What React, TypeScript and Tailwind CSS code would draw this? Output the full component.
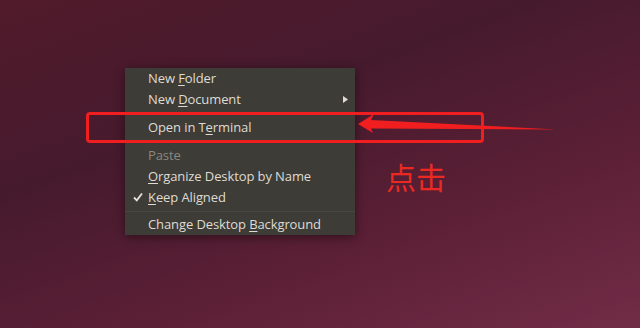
import React from 'react';

type Item =
  | { kind: 'sep' }
  | { kind: 'item'; before: string; key: string; after: string; disabled?: boolean; checked?: boolean; submenu?: boolean };

const items: Item[] = [
  { kind: 'item', before: 'New ', key: 'F', after: 'older' },
  { kind: 'item', before: 'New ', key: 'D', after: 'ocument', submenu: true },
  { kind: 'sep' },
  { kind: 'item', before: 'Open in T', key: 'e', after: 'rminal' },
  { kind: 'sep' },
  { kind: 'item', before: 'Paste', key: '', after: '', disabled: true },
  { kind: 'item', before: '', key: 'O', after: 'rganize Desktop by Name' },
  { kind: 'item', before: '', key: 'K', after: 'eep Aligned', checked: true },
  { kind: 'sep' },
  { kind: 'item', before: 'Change Desktop ', key: 'B', after: 'ackground' },
];

function ContextMenu() {
  return (
    <div
      className="absolute left-[125px] top-[68px] w-[230px] pb-px bg-[#3d3c37] shadow-[0_2px_10px_rgba(0,0,0,0.45)] text-[13px] tracking-[-0.1px] text-[#dfdbd2]"
      style={{ fontFamily: '"Open Sans", "DejaVu Sans", sans-serif' }}
    >
      {items.map((it, i) =>
        it.kind === 'sep' ? (
          <div key={i} className="h-[7px] flex items-center">
            <div className="w-full h-px bg-[#2f2e2a] border-b border-[#47463f]" />
          </div>
        ) : (
          <div key={i} className="relative h-[21px] last:h-[19px] flex items-center pl-[23px] pr-2 leading-none">
            {it.checked && (
              <svg className="absolute left-[8px] top-[5px]" width="10" height="10" viewBox="0 0 10 10">
                <path d="M1 5.5 L3.8 8.3 L9 1.5" fill="none" stroke="#e6e2da" strokeWidth="1.8" />
              </svg>
            )}
            <span className={it.disabled ? 'text-[#8a877f]' : ''}>
              {it.before}
              {it.key && <span className="underline underline-offset-2 decoration-1">{it.key}</span>}
              {it.after}
            </span>
            {it.submenu && (
              <svg className="absolute right-[7px] top-[7px]" width="5" height="7" viewBox="0 0 5 7">
                <path d="M0 0 L5 3.5 L0 7 Z" fill="#dfdbd2" />
              </svg>
            )}
          </div>
        )
      )}
    </div>
  );
}

export default function App() {
  return (
    <div className="relative w-[640px] h-[328px] overflow-hidden bg-[linear-gradient(160deg,#511b2b_0%,#461a2d_35%,#5a1f35_65%,#722c46_100%)]">
      <ContextMenu />

      {/* red highlight box */}
      <div className="absolute left-[86px] top-[112px] w-[398px] h-[31px] border-[3px] border-[#f01e1e] rounded-[4px]" />

      {/* arrow */}
      <svg className="absolute left-0 top-0" width="640" height="328" viewBox="0 0 640 328">
        <polygon points="358,124 374,114 371,120 557,129.5 371,128.5 373,133" fill="#f01e1e" />
      </svg>

      <div
        className="absolute left-[386px] top-[161px] text-[30px] leading-none text-[#ea2a22]"
        style={{ fontFamily: '"Noto Sans CJK SC", sans-serif' }}
      >
        点击
      </div>
    </div>
  );
}
